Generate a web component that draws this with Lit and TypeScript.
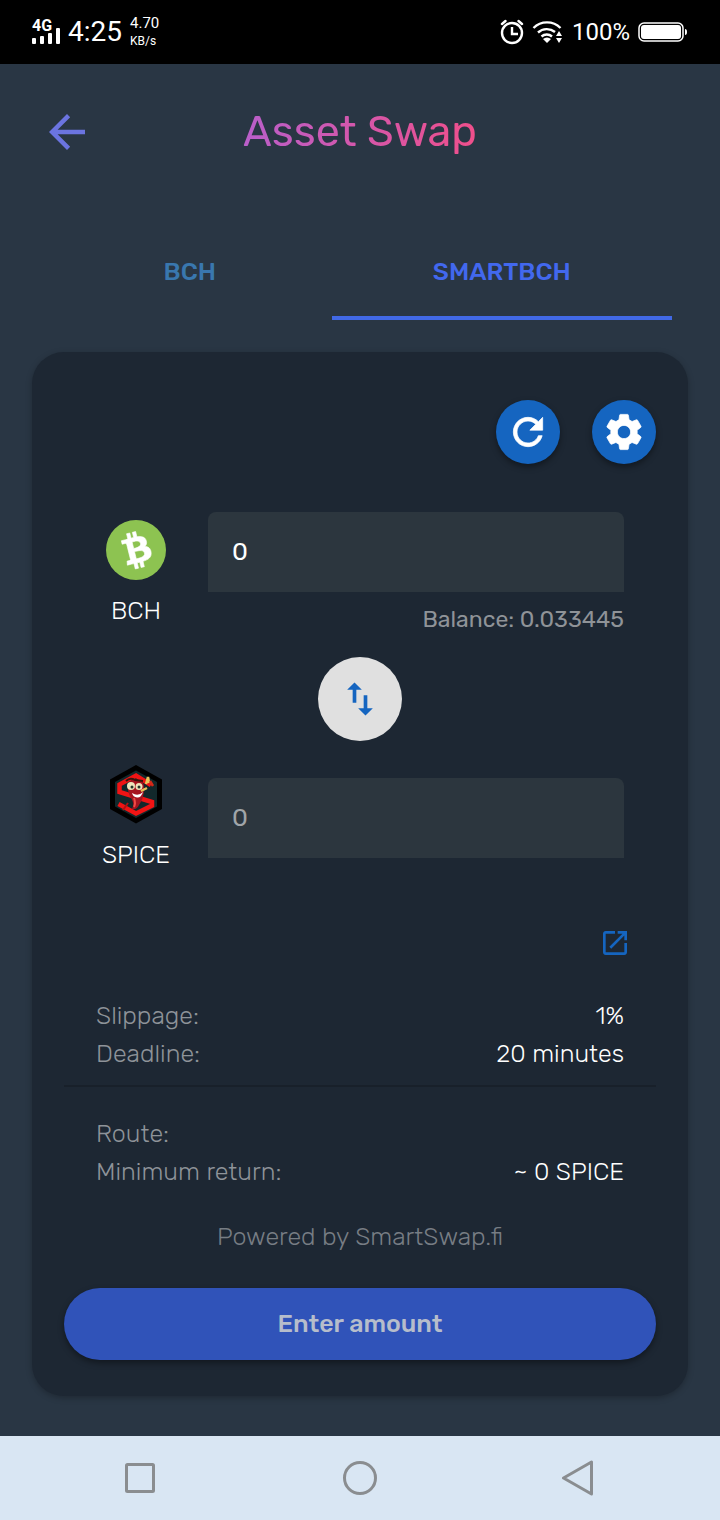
import { LitElement, html, css, svg } from "lit";
import { customElement, property } from "lit/decorators.js";

const ICONS = {
  back: "M20 11H7.83l5.59-5.59L12 4l-8 8 8 8 1.41-1.41L7.83 13H20v-2z",
  refresh:
    "M17.65 6.35C16.2 4.9 14.21 4 12 4c-4.42 0-7.99 3.58-7.99 8s3.57 8 7.99 8c3.73 0 6.84-2.55 7.73-6h-2.08c-.82 2.33-3.04 4-5.65 4-3.31 0-6-2.69-6-6s2.69-6 6-6c1.66 0 3.14.69 4.22 1.78L13 11h7V4l-2.35 2.35z",
  settings:
    "M19.14 12.94c.04-.3.06-.61.06-.94 0-.32-.02-.64-.07-.94l2.03-1.58c.18-.14.23-.41.12-.61l-1.92-3.32c-.12-.22-.37-.29-.59-.22l-2.39.96c-.5-.38-1.03-.7-1.62-.94l-.36-2.54c-.04-.24-.24-.41-.48-.41h-3.84c-.24 0-.43.17-.47.41l-.36 2.54c-.59.24-1.13.57-1.62.94l-2.39-.96c-.22-.08-.47 0-.59.22L2.74 8.87c-.12.21-.08.47.12.61l2.03 1.58c-.05.3-.09.63-.09.94s.02.64.07.94l-2.03 1.58c-.18.14-.23.41-.12.61l1.92 3.32c.12.22.37.29.59.22l2.39-.96c.5.38 1.03.7 1.62.94l.36 2.54c.05.24.24.41.48.41h3.84c.24 0 .44-.17.47-.41l.36-2.54c.59-.24 1.13-.56 1.62-.94l2.39.96c.22.08.47 0 .59-.22l1.92-3.32c.12-.22.07-.47-.12-.61l-2.01-1.58zM12 15.6c-1.98 0-3.6-1.62-3.6-3.6s1.62-3.6 3.6-3.6 3.6 1.62 3.6 3.6-1.62 3.6-3.6 3.6z",
  swap: "M9 3L5 6.99h3V14h2V6.99h3L9 3zm7 14.01V10h-2v7.01h-3L15 21l4-3.99h-3z",
  open: "M19 19H5V5h7V3H5c-1.11 0-2 .9-2 2v14c0 1.1.89 2 2 2h14c1.1 0 2-.9 2-2v-7h-2v7zM14 3v2h3.59l-9.83 9.83 1.41 1.41L19 6.41V10h2V3h-7z",
};

const COIN =
  "M23.189 14.02c.314-2.096-1.283-3.223-3.465-3.975l.708-2.84-1.728-.43-.69 2.765c-.454-.114-.92-.22-1.385-.326l.695-2.783L15.596 6l-.708 2.839c-.376-.086-.746-.17-1.104-.26l.002-.009-2.384-.595-.46 1.846s1.283.294 1.256.312c.7.175.826.638.805 1.006l-.806 3.235c.048.012.11.03.18.057l-.183-.045-1.13 4.532c-.086.212-.303.531-.793.41.018.025-1.256-.313-1.256-.313l-.858 1.978 2.25.561c.418.105.828.215 1.231.318l-.715 2.872 1.727.43.708-2.84c.472.127.93.245 1.378.357l-.706 2.828 1.728.43.715-2.866c2.948.558 5.164.333 6.097-2.333.752-2.146-.037-3.385-1.588-4.192 1.13-.26 1.98-1.003 2.207-2.538zm-3.95 5.538c-.533 2.147-4.148.986-5.32.695l.95-3.805c1.172.293 4.929.872 4.37 3.11zm.535-5.569c-.487 1.953-3.495.96-4.47.717l.86-3.45c.975.243 4.118.696 3.61 2.733z";

const icon = (path: string) =>
  html`<svg viewBox="0 0 24 24" fill="currentColor" aria-hidden="true">${svg`<path d=${path} />`}</svg>`;

@customElement("status-bar")
class StatusBar extends LitElement {
  static styles = css`
    :host {
      display: flex;
      justify-content: space-between;
      align-items: center;
      height: 64px;
      padding: 0 32px;
      box-sizing: border-box;
      background: #000;
      color: #fff;
      font-family: Roboto, sans-serif;
      font-weight: 400;
    }
    .side {
      display: flex;
      align-items: center;
      gap: 8px;
    }
    .signal {
      display: flex;
      flex-direction: column;
      width: 28px;
    }
    .signal span {
      font-size: 16px;
      font-weight: 700;
      line-height: 12px;
    }
    .signal svg {
      display: block;
      width: 28px;
      height: 16px;
      margin-top: -4px;
    }
    .time {
      font-size: 28px;
      line-height: 32px;
    }
    .speed {
      display: flex;
      flex-direction: column;
      font-size: 15px;
      line-height: 18px;
    }
    .unit {
      font-size: 12px;
    }
    .percent {
      font-size: 24px;
      line-height: 32px;
    }
    .glyph {
      display: block;
    }
  `;
  render() {
    return html`
      <div class="side">
        <div class="signal">
          <span>4G</span>
          <svg viewBox="0 0 28 16" fill="#fff">
            <rect x="0" y="10" width="4" height="6" rx="1" />
            <rect x="8" y="8" width="4" height="8" rx="1" />
            <rect x="16" y="5" width="4" height="11" rx="1" />
            <rect x="24" y="0" width="4" height="16" rx="1" />
          </svg>
        </div>
        <div class="time">4:25</div>
        <div class="speed"><span>4.70</span><span class="unit">KB/s</span></div>
      </div>
      <div class="side">
        <svg class="glyph" width="24" height="26" viewBox="0 0 24 26" fill="none" stroke="#fff">
          <circle cx="12" cy="14" r="10" stroke-width="2.4" />
          <path d="M12 8v7h6" stroke-width="2.4" />
          <path d="M2 5l3.500-3M22 5l-3.500-3" stroke-width="2.400" stroke-linecap="round" />
        </svg>
        <svg class="glyph" width="32" height="24" viewBox="0 0 32 24" fill="none" stroke="#fff" stroke-width="2.400">
          <path d="M1.500 8a19 19 0 0 1 27 0M6 12.500a13 13 0 0 1 17-.500M9.500 16.500a8 8 0 0 1 10.500 0" />
          <path d="M11 19a6 6 0 0 1 8 0l-4 4z" fill="#fff" stroke="none" />
          <path d="M24 16l3-5 3 5zM24 18h6l-3 5z" fill="#fff" stroke="none" />
        </svg>
        <div class="percent">100%</div>
        <svg class="glyph" width="50" height="20" viewBox="0 0 50 20">
          <rect x="1" y="1" width="44" height="18" rx="5" fill="none" stroke="#fff" stroke-width="1.500" />
          <rect x="3" y="3" width="40" height="14" rx="3" fill="#fff" />
          <path d="M47 7q2 0 2 3t-2 3z" fill="#fff" />
        </svg>
      </div>
    `;
  }
}

@customElement("token-row")
class TokenRow extends LitElement {
  @property() name = "";
  @property() value = "";
  @property() balance = "";
  @property({ type: Boolean }) low = false;

  static styles = css`
    :host {
      display: grid;
      grid-template-columns: 144px 1fr;
      padding-right: 32px;
    }
    .token {
      display: flex;
      flex-direction: column;
      align-items: center;
      gap: 15px;
      padding-top: 8px;
      font-size: 25px;
      font-weight: 300;
      line-height: 32px;
      color: #fff;
    }
    .token.flush {
      padding-top: 0;
    }
    .field {
      display: flex;
      flex-direction: column;
    }
    .field.drop {
      padding-top: 14px;
    }
    input {
      box-sizing: border-box;
      width: 100%;
      height: 80px;
      padding: 0 24px 2px;
      border: 0;
      outline: 0;
      border-radius: 8px 8px 0 0;
      background: #2c363e;
      color: #fff;
      font: 400 25px/32px Rubik, Inter, sans-serif;
    }
    input::placeholder {
      color: #a0a5a9;
      opacity: 1;
    }
    .balance {
      margin-top: 11px;
      text-align: right;
      font-size: 23px;
      font-weight: 400;
      line-height: 32px;
      color: #8f9398;
    }
  `;
  render() {
    return html`
      <label class="token ${this.low ? "flush" : ""}" for="amount">
        <slot></slot>
        <span>${this.name}</span>
      </label>
      <div class="field ${this.low ? "drop" : ""}">
        <input id="amount" inputmode="decimal" placeholder="0" .value=${this.value} />
        ${this.balance ? html`<div class="balance">Balance: ${this.balance}</div>` : ""}
      </div>
    `;
  }
}

@customElement("app-root")
class AppRoot extends LitElement {
  static styles = css`
    :host {
      display: flex;
      flex-direction: column;
      min-height: 100vh;
      background: #293644;
      color: #fff;
      font-family: Rubik, Inter, sans-serif;
      font-size: 25px;
      font-weight: 300;
    }
    button {
      padding: 0;
      border: 0;
      background: none;
      font: inherit;
      color: inherit;
    }
    svg {
      display: block;
    }
    main {
      flex: 1;
      padding: 0 32px 40px;
    }
    .header {
      display: grid;
      grid-template-columns: 1fr auto 1fr;
      align-items: center;
      height: 136px;
      padding: 0 8px;
    }
    .back {
      width: 54px;
      height: 54px;
      color: #6b74e0;
    }
    h1 {
      margin: 0;
      font-size: 43px;
      font-weight: 400;
      line-height: 56px;
      background: linear-gradient(90deg, #b95fca, #f04f8b);
      background-clip: text;
      -webkit-background-clip: text;
      color: transparent;
    }
    .tabs {
      display: grid;
      grid-template-columns: 5fr 6fr;
      height: 96px;
      margin: 24px 16px 32px;
    }
    .tab {
      border-bottom: 4px solid transparent;
      padding-top: 2px;
      font-weight: 500;
      color: #3977ae;
    }
    .tab.active {
      color: #4268ee;
      border-color: #4169e6;
    }
    .card {
      padding: 48px 32px 36px;
      border-radius: 32px;
      background: #1d2733;
      box-shadow: 0 2px 6px rgba(0, 0, 0, 0.25);
    }
    .tools {
      display: flex;
      justify-content: flex-end;
      gap: 32px;
      margin-bottom: 48px;
    }
    .round {
      display: grid;
      place-items: center;
      width: 64px;
      height: 64px;
      border-radius: 50%;
      background: #1565c0;
      box-shadow: 0 3px 6px rgba(0, 0, 0, 0.4);
    }
    .round svg,
    .swap svg {
      width: 44px;
      height: 44px;
    }
    .round path {
      stroke: currentColor;
      stroke-width: 0.4;
    }
    .swap {
      display: grid;
      place-items: center;
      width: 84px;
      height: 84px;
      margin: 22px auto 23px;
      border-radius: 50%;
      background: #e0e0e0;
      color: #1565c0;
    }
    .link {
      display: block;
      width: 32px;
      margin: 56px 25px 38px auto;
      color: #1565c0;
    }
    dl {
      margin: 0;
      padding: 0 32px;
    }
    .pair {
      display: flex;
      justify-content: space-between;
      line-height: 38px;
    }
    dt {
      color: #8e9399;
    }
    dd {
      margin: 0;
    }
    hr {
      height: 2px;
      margin: 12px 0 28px;
      border: 0;
      background: #18202a;
    }
    .powered {
      margin: 27px 0 32px;
      text-align: center;
      line-height: 38px;
      color: #777d84;
    }
    .submit {
      display: block;
      width: 100%;
      height: 72px;
      padding-bottom: 2px;
      border-radius: 36px;
      background: #3053b9;
      box-shadow: 0 3px 6px rgba(0, 0, 0, 0.4);
      color: #b6bdcb;
      font-weight: 500;
    }
    nav {
      display: flex;
      justify-content: space-around;
      align-items: center;
      height: 84px;
      padding: 0 30px;
      background: #d9e6f3;
    }
  `;

  render() {
    return html`
      <status-bar></status-bar>
      <main>
        <div class="header">
          <button class="back" aria-label="Back">${icon(ICONS.back)}</button>
          <h1>Asset Swap</h1>
        </div>
        <div class="tabs" role="tablist">
          <button class="tab" role="tab" aria-selected="false">BCH</button>
          <button class="tab active" role="tab" aria-selected="true">SMARTBCH</button>
        </div>
        <section class="card">
          <div class="tools">
            <button class="round" aria-label="Refresh">${icon(ICONS.refresh)}</button>
            <button class="round" aria-label="Settings">${icon(ICONS.settings)}</button>
          </div>
          <token-row name="BCH" value="0" balance="0.033445">
            <svg width="60" height="60" viewBox="0 0 32 32">
              <circle cx="16" cy="16" r="16" fill="#8dc351" />
              <path d=${COIN} fill="#fff" stroke="#fff" stroke-width=".3" transform="rotate(-28 16 16)" />
            </svg>
          </token-row>
          <button class="swap" aria-label="Switch assets">${icon(ICONS.swap)}</button>
          <token-row name="SPICE" low>
            <svg width="60" height="60" viewBox="0 0 60 60" fill="none">
              <path d="M30 1L56 15.500V45L30 59.500 4 45V15.500z" fill="#000" />
              <path d="M30 6.500L51 18V42.500L30 54 9 42.500V18z" fill="#12282b" />
              <path d="M45 21L30 11.500 13.500 20.500V28L46 38V41.500L30 49.500 12.500 40" stroke="#f01414" stroke-width="4.500" />
              <path d="M22 39l-5 7" stroke="#b01212" stroke-width="2" />
              <path d="M22 21Q24 15 31 16 39 17 38 25 38 34 33 41 31 46 26 45 29 40 25 34 21 27 22 21z" fill="#a51420" />
              <path d="M28 34q2 5 0 9" stroke="#ef4a45" stroke-width="2" />
              <path d="M20 17q4-4 9-1l8 1" stroke="#3b140c" stroke-width="2" />
              <circle cx="25" cy="22" r="4" fill="#efe4bb" />
              <circle cx="33" cy="22.500" r="3.500" fill="#efe4bb" />
              <circle cx="26" cy="23" r="1.500" fill="#26332b" />
              <circle cx="33" cy="23" r="1.500" fill="#26332b" />
              <path d="M26 29q6 4 11-1-2 6-6 5.500T26 29z" fill="#fff" />
              <path d="M35 27l6-3M40 20l2-7 1 6" stroke="#e9c45c" stroke-width="2.500" />
              <path d="M44 17l3 5" stroke="#d22a18" stroke-width="2.500" />
            </svg>
          </token-row>
          <a class="link" href="#" aria-label="Open in explorer">${icon(ICONS.open)}</a>
          <dl>
            <div class="pair"><dt>Slippage:</dt><dd>1%</dd></div>
            <div class="pair"><dt>Deadline:</dt><dd>20 minutes</dd></div>
          </dl>
          <hr />
          <dl>
            <div class="pair"><dt>Route:</dt><dd></dd></div>
            <div class="pair"><dt>Minimum return:</dt><dd>~ 0 SPICE</dd></div>
          </dl>
          <p class="powered">Powered by SmartSwap.fi</p>
          <button class="submit" disabled>Enter amount</button>
        </section>
      </main>
      <nav>
        <button aria-label="Recent apps">
          <svg width="36" height="36" viewBox="0 0 36 36" fill="none" stroke="#8a8d90" stroke-width="3">
            <rect x="4.500" y="4.500" width="27" height="27" rx="1" />
          </svg>
        </button>
        <button aria-label="Home">
          <svg width="36" height="36" viewBox="0 0 36 36" fill="none" stroke="#8a8d90" stroke-width="3">
            <circle cx="18" cy="18" r="15.500" />
          </svg>
        </button>
        <button aria-label="Back">
          <svg width="36" height="36" viewBox="0 0 36 36" fill="none" stroke="#8a8d90" stroke-width="3" stroke-linejoin="round">
            <path d="M29.500 2v32L1.500 18z" />
          </svg>
        </button>
      </nav>
    `;
  }
}
